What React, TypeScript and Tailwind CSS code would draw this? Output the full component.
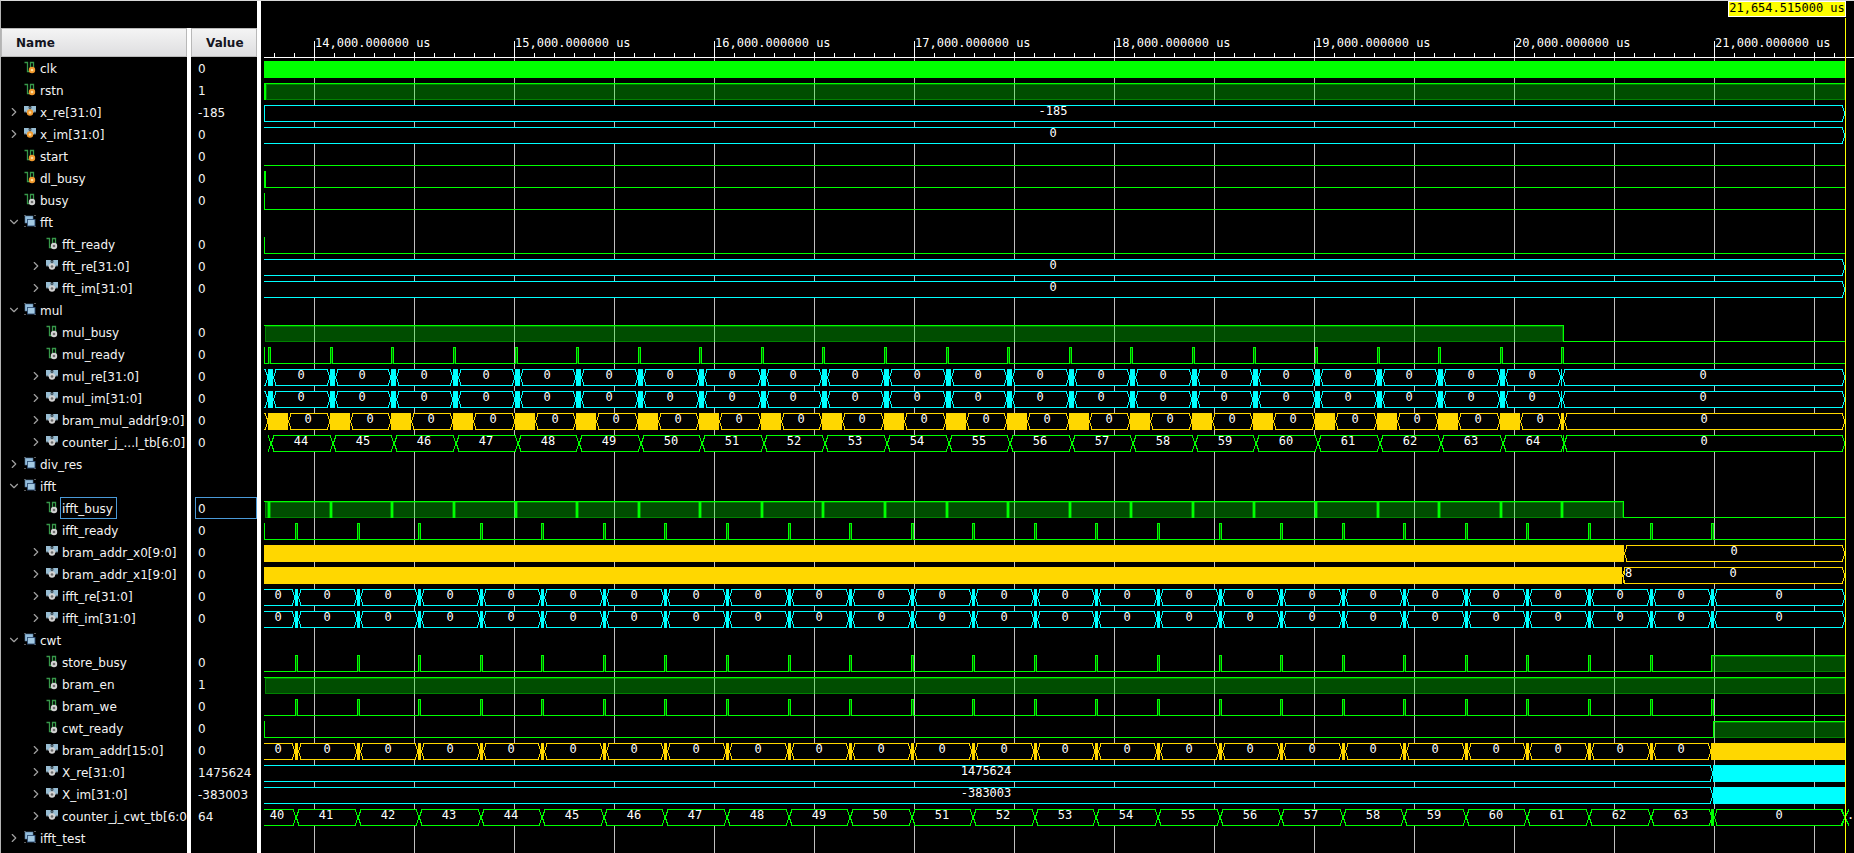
import React from 'react';
import { ChevronDown, ChevronRight } from 'lucide-react';

type Icon = 'bit' | 'bus' | 'group';

interface Signal {
  name: string;
  value?: string;
  icon: Icon;
  input?: boolean;
  depth?: number;
  open?: boolean;
  selected?: boolean;
}

const SIGNALS: Signal[] = [
  { name: 'clk', value: '0', icon: 'bit', input: true },
  { name: 'rstn', value: '1', icon: 'bit', input: true },
  { name: 'x_re[31:0]', value: '-185', icon: 'bus', input: true },
  { name: 'x_im[31:0]', value: '0', icon: 'bus', input: true },
  { name: 'start', value: '0', icon: 'bit', input: true },
  { name: 'dl_busy', value: '0', icon: 'bit', input: true },
  { name: 'busy', value: '0', icon: 'bit' },
  { name: 'fft', icon: 'group', open: true },
  { name: 'fft_ready', value: '0', icon: 'bit', depth: 1 },
  { name: 'fft_re[31:0]', value: '0', icon: 'bus', depth: 1 },
  { name: 'fft_im[31:0]', value: '0', icon: 'bus', depth: 1 },
  { name: 'mul', icon: 'group', open: true },
  { name: 'mul_busy', value: '0', icon: 'bit', depth: 1 },
  { name: 'mul_ready', value: '0', icon: 'bit', depth: 1 },
  { name: 'mul_re[31:0]', value: '0', icon: 'bus', depth: 1 },
  { name: 'mul_im[31:0]', value: '0', icon: 'bus', depth: 1 },
  { name: 'bram_mul_addr[9:0]', value: '0', icon: 'bus', depth: 1 },
  { name: 'counter_j_...l_tb[6:0]', value: '0', icon: 'bus', depth: 1 },
  { name: 'div_res', icon: 'group' },
  { name: 'ifft', icon: 'group', open: true },
  { name: 'ifft_busy', value: '0', icon: 'bit', depth: 1, selected: true },
  { name: 'ifft_ready', value: '0', icon: 'bit', depth: 1 },
  { name: 'bram_addr_x0[9:0]', value: '0', icon: 'bus', depth: 1 },
  { name: 'bram_addr_x1[9:0]', value: '0', icon: 'bus', depth: 1 },
  { name: 'ifft_re[31:0]', value: '0', icon: 'bus', depth: 1 },
  { name: 'ifft_im[31:0]', value: '0', icon: 'bus', depth: 1 },
  { name: 'cwt', icon: 'group', open: true },
  { name: 'store_busy', value: '0', icon: 'bit', depth: 1 },
  { name: 'bram_en', value: '1', icon: 'bit', depth: 1 },
  { name: 'bram_we', value: '0', icon: 'bit', depth: 1 },
  { name: 'cwt_ready', value: '0', icon: 'bit', depth: 1 },
  { name: 'bram_addr[15:0]', value: '0', icon: 'bus', depth: 1 },
  { name: 'X_re[31:0]', value: '1475624', icon: 'bus', depth: 1 },
  { name: 'X_im[31:0]', value: '-383003', icon: 'bus', depth: 1 },
  { name: 'counter_j_cwt_tb[6:0]', value: '64', icon: 'bus', depth: 1 },
  { name: 'ifft_test', icon: 'group' },
];

function Badge({ cx, cy, input }: { cx: number; cy: number; input?: boolean }) {
  return input ? (
    <g>
      <circle cx={cx} cy={cy} r="3.2" fill="#f29a2e" />
      <circle cx={cx} cy={cy} r="1.3" fill="#ffdf9e" />
    </g>
  ) : (
    <g>
      <circle cx={cx} cy={cy} r="3.2" fill="#d2d2d2" />
      <circle cx={cx} cy={cy} r="1.3" fill="#6d6d6d" />
    </g>
  );
}

function SignalIcon({ icon, input }: { icon: Icon; input?: boolean }) {
  return (
    <svg width="14" height="14" viewBox="0 0 14 14" className="shrink-0" aria-hidden="true">
      {icon === 'bit' && (
        <g>
          <path d="M0.5 1.5H3.5V10.5H6.5V1.5H9.5V8" fill="none" stroke="#37994a" strokeWidth="1.3" />
          <Badge cx={8} cy={9} input={input} />
        </g>
      )}
      {icon === 'bus' && (
        <g>
          <path d="M0 1H5L6 3L7 1H12V7H10L8 9H4L2 7H0Z" fill="#98bdd3" />
          <path d="M4.5 1L6 3L7.5 1V3L6 5L4.5 3Z" fill="#45545e" />
          <path d="M0 7H2L4 9" fill="none" stroke="#5b6a74" strokeWidth="1" />
          <path d="M12 7H10L8 9" fill="none" stroke="#5b6a74" strokeWidth="1" />
          <Badge cx={6} cy={7.5} input={input} />
        </g>
      )}
      {icon === 'group' && (
        <g>
          <path d="M0 0.5H2M10 0.5H12M0 11.5H2M10 11.5H12" stroke="#5a5a5a" strokeWidth="1" />
          <rect x="1" y="1" width="8" height="7" fill="#93bddb" stroke="#55779a" strokeWidth="0.6" />
          <rect x="3.5" y="4.5" width="7.5" height="6.5" fill="#a3c9e2" stroke="#2f4f77" strokeWidth="0.9" />
        </g>
      )}
    </svg>
  );
}

function Row({ s }: { s: Signal }) {
  const expandable = s.icon !== 'bit';
  return (
    <li className={`flex h-[22px] items-center ${s.depth ? 'pl-[28px]' : 'pl-[6px]'}`}>
      <span className="flex w-[17px] shrink-0 items-center">
        {expandable && (
          <button type="button" aria-label={`Toggle ${s.name}`} aria-expanded={!!s.open} className="text-[#a0a0a0]">
            {s.open ? <ChevronDown size={14} strokeWidth={2} /> : <ChevronRight size={14} strokeWidth={2} />}
          </button>
        )}
      </span>
      <SignalIcon icon={s.icon} input={s.input} />
      <span
        className={`flex h-[22px] items-center whitespace-nowrap border px-px pt-px ${
          s.selected ? 'border-[#4a9ad8] pr-[3px]' : 'border-transparent'
        }`}
      >
        {s.name}
      </span>
    </li>
  );
}

const GREEN = '#00ff00';
const CYAN = '#00ffff';
const GOLD = '#ffd700';
const END = 1581;
const H = 16;

const range = (n: number) => Array.from({ length: n }, (_, i) => i);
const MUL = range(22).map((k) => Math.round(4.3 + 61.57 * k));
const IFFT = range(24).map((k) => Math.round(31 + 61.57 * k));

function Low({ x0, x1 }: { x0: number; x1: number }) {
  return <rect x={x0} y={H} width={x1 - x0} height={1} fill={GREEN} />;
}

function Bar({ x, w = 1, color = GREEN }: { x: number; w?: number; color?: string }) {
  return <rect x={x} y={0} width={w} height={H + 1} fill={color} />;
}

function High({ x0, x1 }: { x0: number; x1: number }) {
  return (
    <g fill={GREEN}>
      <rect x={x0} y={0} width={x1 - x0} height={1} />
      <rect x={x0 + 1} y={1} width={x1 - x0 - 1} height={H} fillOpacity={0.3} />
      <rect x={x0 + 1.5} y={1.5} width={x1 - x0 - 2} height={H - 1} fill="none" stroke={GREEN} strokeOpacity={0.3} />
    </g>
  );
}

function Pulses({ at, end = END }: { at: number[]; end?: number }) {
  return (
    <g>
      <Low x0={0} x1={end} />
      {at.map((x) => (
        <g key={x}>
          <rect x={x} y={0} width={3} height={H + 1} fill={GREEN} />
          <rect x={x + 1} y={1} width={1} height={H} fill="#007000" />
        </g>
      ))}
    </g>
  );
}

interface BusProps {
  x0: number;
  x1: number;
  color: string;
  text?: string;
  slant?: number;
  openLeft?: boolean;
  openRight?: boolean;
  textX?: number;
}

function Bus({ x0, x1, color, text, slant = 3, openLeft, openRight, textX }: BusProps) {
  const t = 0.5;
  const b = H + 0.5;
  const m = (t + b) / 2;
  const l = openLeft ? x0 : x0 + slant;
  const r = openRight ? x1 : x1 - slant;
  const top = `M${openLeft ? x0 : x0 + 0.5} ${openLeft ? t : m}L${l} ${t}H${r}${openRight ? '' : `L${x1} ${m}`}`;
  const bottom = `M${openLeft ? x0 : x0 + 0.5} ${openLeft ? b : m}L${l} ${b}H${r}${openRight ? '' : `L${x1} ${m}`}`;
  return (
    <g>
      <rect x={x0} y={0} width={x1 - x0} height={H + 1} fill="#000000" />
      <path d={top} fill="none" stroke={color} />
      <path d={bottom} fill="none" stroke={color} />
      {text && (
        <text x={textX ?? Math.floor((x0 + x1 - 1) / 2)} y={10} textAnchor="middle" fill="#ffffff">
          {text}
        </text>
      )}
    </g>
  );
}

function Cross({ x, color, half = 3 }: { x: number; color: string; half?: number }) {
  return (
    <path
      d={`M${x - half} 0.5L${x + half} ${H + 0.5}M${x + half} 0.5L${x - half} ${H + 0.5}`}
      stroke={color}
      fill="none"
    />
  );
}

function MulBus({ color, width, lastWidth }: { color: string; width: number; lastWidth: number }) {
  return (
    <g>
      {MUL.map((x, i) => {
        const w = i === MUL.length - 1 ? lastWidth : width;
        return <Bus key={x} x0={x + w} x1={i === MUL.length - 1 ? END : MUL[i + 1]} color={color} text="0" />;
      })}
      {MUL.map((x, i) => (
        <Bar key={x} x={x} w={i === MUL.length - 1 ? lastWidth : width} color={color} />
      ))}
      <path d={`M0 0.5H1L4 ${H / 2}M0 ${H + 0.5}H1L4 ${H / 2}`} fill="none" stroke={color} />
    </g>
  );
}

function IfftBus({ color, solidEnd }: { color: string; solidEnd?: boolean }) {
  const last = IFFT[IFFT.length - 1];
  return (
    <g>
      <Bus x0={0} x1={IFFT[0]} color={color} text="0" openLeft textX={14} />
      {IFFT.slice(0, -1).map((x, i) => (
        <Bus key={x} x0={x + 3} x1={IFFT[i + 1]} color={color} text="0" />
      ))}
      {!solidEnd && <Bus x0={last + 3} x1={END} color={color} text="0" />}
      {IFFT.slice(0, -1).map((x) => (
        <Bar key={x} x={x} w={3} color={color} />
      ))}
      <Bar x={last} w={solidEnd ? END - last : 3} color={color} />
    </g>
  );
}

function MulCounter() {
  return (
    <g>
      {MUL.map((x, i) => {
        const isLast = i === MUL.length - 1;
        return (
          <Bus
            key={x}
            x0={x + 3}
            x1={isLast ? END : MUL[i + 1] + 3}
            color={GREEN}
            text={isLast ? '0' : String(44 + i)}
          />
        );
      })}
      {MUL.map((x) => (
        <Cross key={x} x={x + 3} color={GREEN} />
      ))}
      <Bar x={1299} />
    </g>
  );
}

function CwtCounter() {
  const last = IFFT[IFFT.length - 1];
  return (
    <g>
      <Bus x0={0} x1={IFFT[0] + 1} color={GREEN} text="40" openLeft textX={13} />
      {IFFT.slice(0, -1).map((x, i) => (
        <Bus key={x} x0={x + 1} x1={IFFT[i + 1] + 1} color={GREEN} text={String(41 + i)} />
      ))}
      {IFFT.slice(0, -1).map((x) => (
        <Cross key={x} x={x + 1} color={GREEN} />
      ))}
      <Bus x0={last + 3} x1={END} color={GREEN} text="0" />
      <Bar x={last} w={3} />
      <Cross x={END} color={GREEN} half={4} />
      <text x={1583} y={10} fill="#ffffff">.</text>
    </g>
  );
}

const WAVES: Record<number, React.ReactNode> = {
  0: <Bar x={0} w={END} />,
  1: <g><High x0={1} x1={END} /><Bar x={0} w={2} /></g>,
  2: <g><Bus x0={0} x1={END} color={CYAN} text="-185" openLeft textX={789} /><Bar x={0} color={CYAN} /></g>,
  3: <Bus x0={0} x1={END} color={CYAN} text="0" openLeft textX={789} />,
  4: <Low x0={0} x1={END} />,
  5: <g><Low x0={0} x1={END} /><Bar x={0} w={2} /></g>,
  6: <g><Low x0={0} x1={END} /><Bar x={0} /></g>,
  8: <g><Low x0={0} x1={END} /><Bar x={0} /></g>,
  9: <Bus x0={0} x1={END} color={CYAN} text="0" openLeft textX={789} />,
  10: <Bus x0={0} x1={END} color={CYAN} text="0" openLeft textX={789} />,
  12: <g><High x0={0} x1={1299} /><Bar x={1299} /><Low x0={1299} x1={END} /></g>,
  13: <g><Pulses at={MUL} /><Bar x={0} /></g>,
  14: <MulBus color={CYAN} width={5} lastWidth={1} />,
  15: <MulBus color={CYAN} width={5} lastWidth={1} />,
  16: <MulBus color={GOLD} width={20} lastWidth={3} />,
  17: <MulCounter />,
  20: (
    <g>
      <High x0={0} x1={1359} />
      {MUL.map((x) => <Bar key={x} x={x} w={2} />)}
      {MUL.map((x) => <rect key={x} x={x - 1} y={0} width={4} height={H + 1} fill={GREEN} fillOpacity={0.4} />)}
      <Bar x={1359} />
      <Low x0={1359} x1={END} />
    </g>
  ),
  21: <g><Pulses at={IFFT} /><Bar x={0} /></g>,
  22: <g><Bar x={0} w={1360} color={GOLD} /><Bus x0={1360} x1={END} color={GOLD} text="0" /></g>,
  23: (
    <g>
      <Bar x={0} w={1358} color={GOLD} />
      <Bus x0={1358} x1={END} color={GOLD} text="0" textX={1469} />
      <path d={`M1359 ${H}L1361 1`} stroke={GOLD} />
      <text x={1361} y={10} fill="#ffffff">8</text>
    </g>
  ),
  24: <IfftBus color={CYAN} />,
  25: <IfftBus color={CYAN} />,
  27: <g><Pulses at={IFFT.slice(0, -1)} end={1447} /><High x0={1447} x1={END} /><Bar x={1447} /></g>,
  28: <High x0={0} x1={END} />,
  29: <Pulses at={IFFT} />,
  30: <g><Bar x={0} /><Low x0={0} x1={1449} /><High x0={1449} x1={END} /><Bar x={1449} /></g>,
  31: <IfftBus color={GOLD} solidEnd />,
  32: <g><Bus x0={0} x1={1449} color={CYAN} text="1475624" openLeft textX={722} /><Bar x={1449} w={132} color={CYAN} /></g>,
  33: <g><Bus x0={0} x1={1449} color={CYAN} text="-383003" openLeft textX={722} /><Bar x={1449} w={132} color={CYAN} /></g>,
  34: <CwtCounter />,
};

function Ruler() {
  return (
    <svg className="block h-[57px] w-full font-['DejaVu_Sans_Mono',monospace] text-xs" shapeRendering="crispEdges">
      {range(79).map((i) => {
        const x = 10 + 20 * i;
        const major = x % 200 === 50;
        const half = x % 100 === 50;
        const top = major ? 40 : half ? 51 : 52;
        return <rect key={x} x={x} y={top} width={1} height={56 - top} fill="#ffffff" />;
      })}
      {range(8).map((i) => (
        <text key={i} x={51 + 200 * i} y={46} fill="#ffffff">
          {`${14 + i},000.000000 us`}
        </text>
      ))}
      <rect x={0} y={56} width="100%" height={1} fill="#ffffff" />
      <rect x={1464.5} y={0.5} width={117} height={15} fill="#ffff00" stroke="#ffffff" />
      <text x={1523} y={11} textAnchor="middle" fill="#000000">21,654.515000 us</text>
      <rect x={END} y={17} width={1} height={40} fill="#ffff00" />
    </svg>
  );
}

function Waves() {
  return (
    <svg className="block h-[795px] w-full font-['DejaVu_Sans_Mono',monospace] text-xs" shapeRendering="crispEdges">
      {range(16).map((i) => (
        <rect key={i} x={50 + 100 * i} y={0} width={1} height="100%" fill="#c0c0c0" />
      ))}
      {SIGNALS.map((s, i) => (
        <g key={s.name} transform={`translate(0 ${3 + 22 * i})`}>{WAVES[i]}</g>
      ))}
      <rect x={END} y={0} width={1} height="100%" fill="#ffff00" />
    </svg>
  );
}

const HEADER =
  'flex h-[29px] items-center border border-[#b8b8b8] bg-linear-to-b from-[#f4f4f4] to-[#dedee0] font-bold text-[#14141e]';

export default function App() {
  return (
    <main className="flex min-h-screen overflow-hidden border-t border-l border-t-[#d8d8d8] border-l-[#b4b4b4] bg-black font-['DejaVu_Sans',sans-serif] text-xs leading-4 text-[#f4f4f4]">
      <div className="flex shrink-0 flex-col">
        <div className="h-[27px]" />
        <div className="flex grow gap-1 bg-white">
          <section className="w-[186px] overflow-hidden bg-black">
            <h2 className={`${HEADER} pl-[14px]`}>Name</h2>
            <ul>
              {SIGNALS.map((s) => <Row key={s.name} s={s} />)}
            </ul>
          </section>
          <section className="w-[66px] overflow-hidden bg-black">
            <h2 className={`${HEADER} pl-[14px]`}>Value</h2>
            <ul className="pl-1">
              {SIGNALS.map((s) => (
                <li
                  key={s.name}
                  className={`flex h-[22px] items-center border pt-px pl-[2px] ${
                    s.selected ? 'border-[#4a9ad8]' : 'border-transparent'
                  }`}
                >
                  {s.value}
                </li>
              ))}
            </ul>
          </section>
        </div>
      </div>
      <div className="w-1 shrink-0 bg-white" />
      <section className="min-w-0 grow pl-[3px]" aria-label="Waveforms">
        <Ruler />
        <Waves />
      </section>
    </main>
  );
}
